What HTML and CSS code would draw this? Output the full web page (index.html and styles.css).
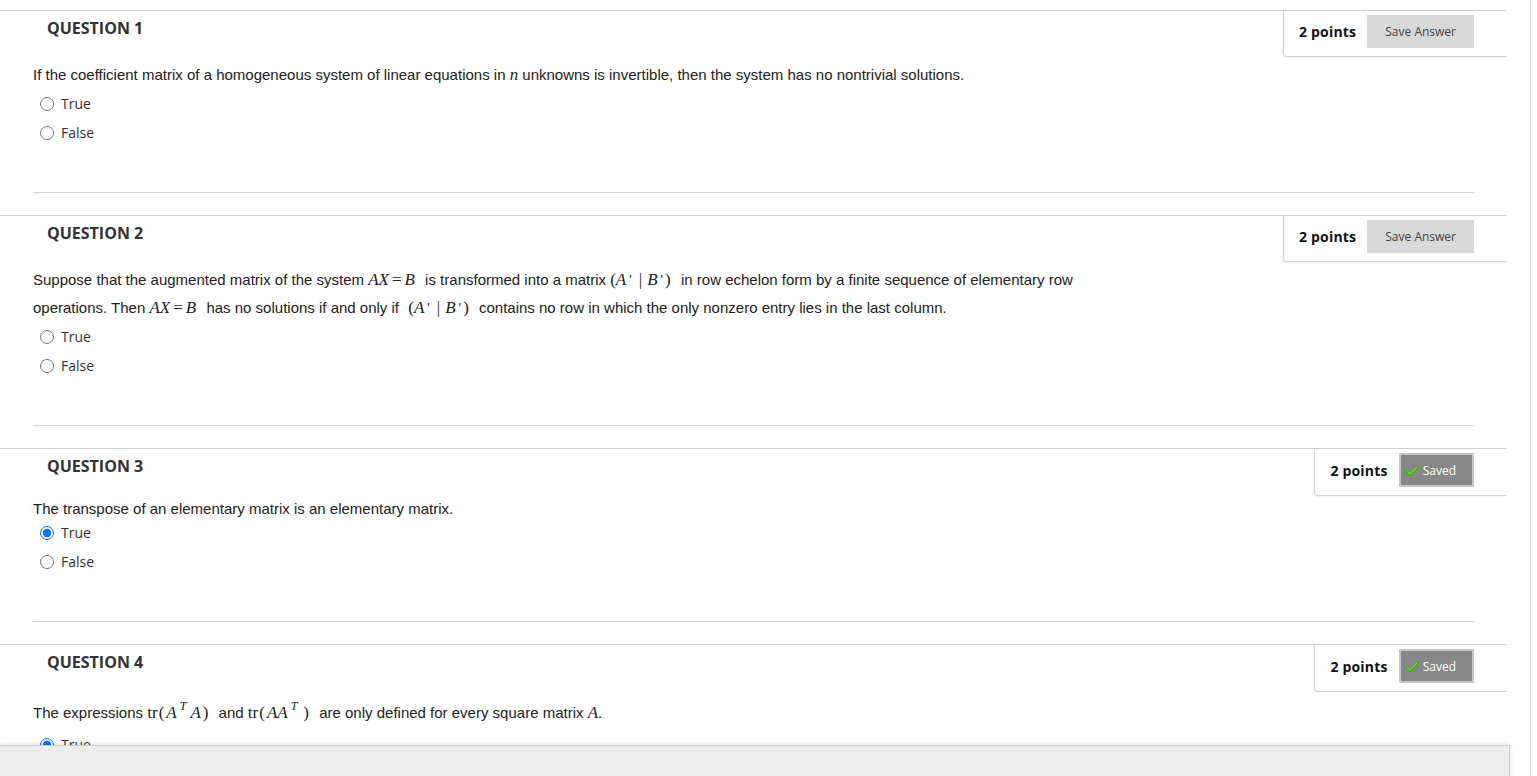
FILE: index.html
```html
<!DOCTYPE html>
<html lang="en">
<head>
<meta charset="utf-8">
<title>Test</title>
<link rel="stylesheet" href="styles.css">
</head>
<body>
<div class="page">

  <div class="question">
    <div class="q-head">
      <h3 class="q-title">QUESTION 1</h3>
      <div class="q-points">
        <span class="pts">2 points</span>
        <button class="btn-save">Save Answer</button>
      </div>
    </div>
    <div class="q-body">
      <p class="q-text q-text-math">If the coefficient matrix of a homogeneous system of linear equations in <span class="m"><i>n</i></span> unknowns is invertible, then the system has no nontrivial solutions.</p>
      <ul class="choices">
        <li class="choice"><input type="radio" name="q1" id="q1t"><label for="q1t">True</label></li>
        <li class="choice"><input type="radio" name="q1" id="q1f"><label for="q1f">False</label></li>
      </ul>
    </div>
  </div>

  <div class="question">
    <div class="q-head">
      <h3 class="q-title">QUESTION 2</h3>
      <div class="q-points">
        <span class="pts">2 points</span>
        <button class="btn-save">Save Answer</button>
      </div>
    </div>
    <div class="q-body">
      <p class="q-text q-text-math q-text-2">Suppose that the augmented matrix of the system <span class="m m-sp"><i>AX</i><span class="eq">=</span><i>B</i></span> is transformed into a matrix <span class="m m-sp">(<i>A</i><span class="pr">'</span><span class="bar">|</span><i>B</i><span class="pr">'</span>)</span> in row echelon form by a finite sequence of elementary row operations. Then <span class="m m-sp"><i>AX</i><span class="eq">=</span><i>B</i></span> has no solutions if and only if <span class="m m-sp m-sp-l">(<i>A</i><span class="pr">'</span><span class="bar">|</span><i>B</i><span class="pr">'</span>)</span> contains no row in which the only nonzero entry lies in the last column.</p>
      <ul class="choices">
        <li class="choice"><input type="radio" name="q2" id="q2t"><label for="q2t">True</label></li>
        <li class="choice"><input type="radio" name="q2" id="q2f"><label for="q2f">False</label></li>
      </ul>
    </div>
  </div>

  <div class="question">
    <div class="q-head">
      <h3 class="q-title">QUESTION 3</h3>
      <div class="q-points">
        <span class="pts">2 points</span>
        <button class="btn-saved"><svg class="check" width="14" height="12" viewBox="0 0 14 12"><path d="M1.5 6.5 L5 10 L12.5 2" fill="none" stroke="#46ad17" stroke-width="3" stroke-linecap="round" stroke-linejoin="round"/><path d="M2.3 6.6 L5 9.2 L11.8 2.2" fill="none" stroke="#8fdc5a" stroke-width="1" stroke-linecap="round"/></svg>Saved</button>
      </div>
    </div>
    <div class="q-body">
      <p class="q-text">The transpose of an elementary matrix is an elementary matrix.</p>
      <ul class="choices">
        <li class="choice"><input type="radio" name="q3" id="q3t" checked><label for="q3t">True</label></li>
        <li class="choice"><input type="radio" name="q3" id="q3f"><label for="q3f">False</label></li>
      </ul>
    </div>
  </div>

  <div class="question">
    <div class="q-head">
      <h3 class="q-title">QUESTION 4</h3>
      <div class="q-points">
        <span class="pts">2 points</span>
        <button class="btn-saved"><svg class="check" width="14" height="12" viewBox="0 0 14 12"><path d="M1.5 6.5 L5 10 L12.5 2" fill="none" stroke="#46ad17" stroke-width="3" stroke-linecap="round" stroke-linejoin="round"/><path d="M2.3 6.6 L5 9.2 L11.8 2.2" fill="none" stroke="#8fdc5a" stroke-width="1" stroke-linecap="round"/></svg>Saved</button>
      </div>
    </div>
    <div class="q-body">
      <p class="q-text q-text-tall">The expressions <span class="m m-sp">tr<span class="op">(</span><i>A</i><sup><i>T</i></sup><i>A</i><span class="cp">)</span></span> and <span class="m m-sp">tr<span class="op">(</span><i>AA</i><sup><i>T</i></sup><span class="cp">)</span></span> are only defined for every square matrix <span class="m"><i>A</i></span>.</p>
      <ul class="choices">
        <li class="choice"><input type="radio" name="q4" id="q4t" checked><label for="q4t">True</label></li>
        <li class="choice"><input type="radio" name="q4" id="q4f"><label for="q4f">False</label></li>
      </ul>
    </div>
  </div>

</div>
<div class="footer-bar"></div>
</body>
</html>
```

FILE: styles.css
```css
* { box-sizing: border-box; }

html, body {
  margin: 0;
  padding: 0;
  background: #fff;
}

body {
  font-family: "Open Sans", "Liberation Sans", sans-serif;
  color: #333;
}

.page {
  width: 1531px;
  min-height: 100vh;
  padding-top: 10px;
  border-right: 1px solid #d6d6d6;
}

.question {
  width: 1507px;
  border-top: 1px solid #cfcfcf;
  margin-bottom: 22px;
}

.q-head {
  display: flex;
  justify-content: space-between;
  align-items: flex-start;
}

.q-title {
  margin: 6px 0 0 47px;
  font-size: 16px;
  line-height: 22px;
  font-weight: 700;
  color: #333;
}

.q-points {
  display: flex;
  align-items: center;
  gap: 11px;
  padding: 4px 33px 8px 15px;
  border-left: 1px solid #d4d4d4;
  border-bottom: 1px solid #d4d4d4;
  border-bottom-left-radius: 4px;
  box-shadow: -1px 1px 2px rgba(0, 0, 0, 0.06);
}

.pts {
  font-size: 14px;
  font-weight: 700;
  letter-spacing: 0.2px;
  color: #111;
}

.btn-save {
  height: 33px;
  padding: 0 18px;
  border: none;
  background: #d9d9d9;
  font-family: "Open Sans", "Liberation Sans", sans-serif;
  font-size: 12px;
  color: #444;
}

.btn-saved {
  display: flex;
  align-items: center;
  gap: 4px;
  height: 34px;
  padding: 0 16px 0 4px;
  border: 2px solid #c6c6c6;
  background: #888;
  font-family: "Open Sans", "Liberation Sans", sans-serif;
  font-size: 12px;
  color: #fff;
}

.check { display: block; margin-top: 2px; }

.q-body {
  margin: 0 33px;
  padding-bottom: 45px;
  border-bottom: 1px solid #d4d4d4;
}

.q-text {
  margin: 4px 0 0;
  max-width: 1080px;
  font-family: "Liberation Sans", Arial, sans-serif;
  font-size: 15px;
  line-height: 18px;
  color: #222;
}

.q-text-math { line-height: 28px; }
.q-text-2 { line-height: 27px; }
.q-text-tall { line-height: 34px; }

.m {
  font-family: "Liberation Serif", "Times New Roman", serif;
  font-size: 17px;
  color: #222;
}

.m i { font-style: italic; }

.m .eq { margin: 0 3px; }
.m .pr { margin: 0 2px 0 3px; font-size: 14px; }
.m .bar { margin: 0 5px; }
.m .op { margin: 0 2px 0 1px; }
.m .cp { margin-left: 2px; }
.m-sp { margin-right: 6px; }
.m-sp-l { margin-left: 5px; }

.m sup {
  font-size: 12px;
  line-height: 0;
  vertical-align: 8px;
  margin: 0 4px 0 3px;
}

.choices {
  list-style: none;
  margin: 0;
  padding: 0;
}

.choice {
  display: flex;
  align-items: center;
  height: 29px;
  padding-left: 7px;
}

.choice input {
  width: 14px;
  height: 14px;
  margin: 0 7px 0 0;
}

.choice label {
  font-size: 14px;
  color: #333;
}

.footer-bar {
  position: fixed;
  left: 0;
  bottom: -20px;
  width: 1510px;
  height: 51px;
  background: #ededed;
  border: 1px solid #cfcfcf;
  border-left: none;
  box-shadow: 0 -1px 4px rgba(0, 0, 0, 0.12);
}
```
